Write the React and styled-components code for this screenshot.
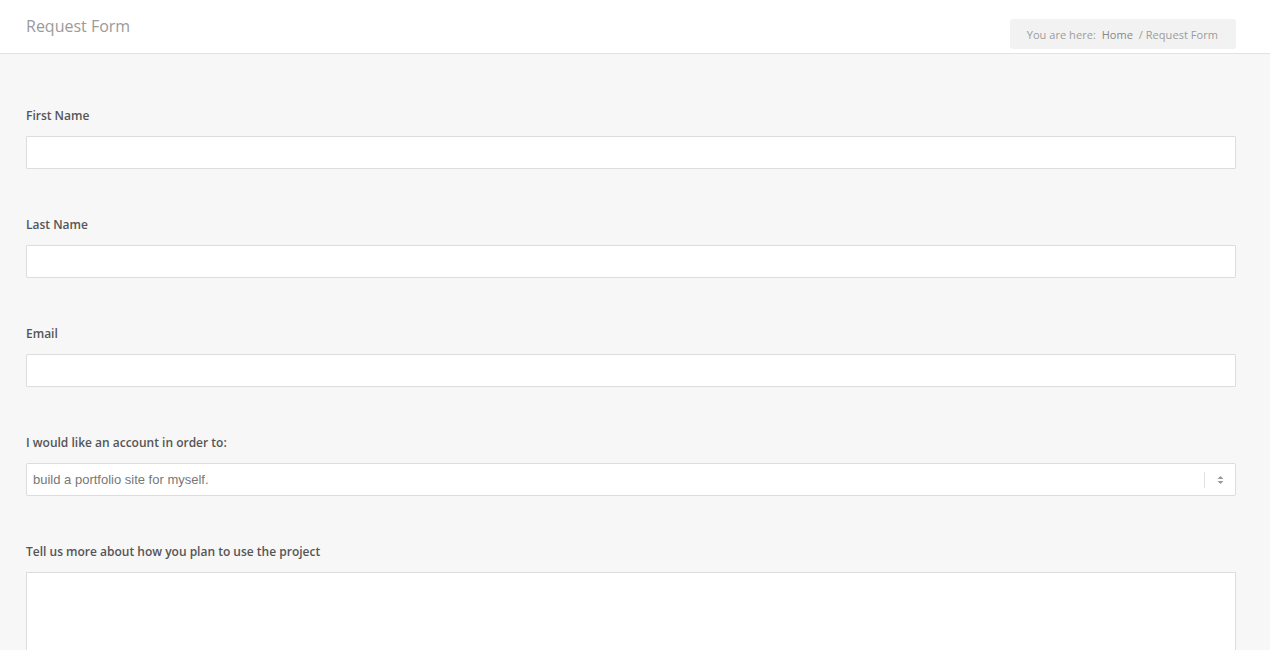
import React from 'react';
import styled, { createGlobalStyle } from 'styled-components';

const Global = createGlobalStyle`
  html, body { margin: 0; padding: 0; }
  body {
    background: #f7f7f7;
    font-family: "Open Sans", "Liberation Sans", sans-serif;
  }
`;

const Header = styled.div`
  height: 53px;
  background: #fff;
  border-bottom: 1px solid #e2e2e2;
  display: flex;
  align-items: flex-start;
  justify-content: space-between;
  padding: 0 34px 0 26px;
`;

const Title = styled.h1`
  margin: 15px 0 0;
  font-size: 16px;
  font-weight: 400;
  line-height: 22px;
  color: #9a9a9a;
`;

const Crumbs = styled.div`
  margin-top: 19px;
  height: 30px;
  display: flex;
  align-items: center;
  padding: 0 18px 0 17px;
  background: #f2f2f2;
  border-radius: 3px;
  font-size: 11px;
  letter-spacing: 0.05px;
  color: #9c9c9c;
  white-space: pre;
`;

const Crumb = styled.span`
  color: ${({ $link }) => ($link ? '#888' : '#9c9c9c')};
`;

const Main = styled.form`
  padding: 53px 34px 0 26px;
  display: flex;
  flex-direction: column;
  gap: 47px;
`;

const Field = styled.div`
  display: flex;
  flex-direction: column;
  gap: 12px;
`;

const Label = styled.label`
  font-size: 12px;
  font-weight: 600;
  line-height: 17px;
  color: #555;
`;

const Input = styled.input`
  box-sizing: border-box;
  height: 33px;
  border: 1px solid #dddddd;
  background: #fff;
  border-radius: 1px;
  outline: none;
`;

const SelectBox = styled.div`
  box-sizing: border-box;
  height: 33px;
  border: 1px solid #dddddd;
  background: #fff;
  border-radius: 2px;
  display: flex;
  align-items: center;
  padding-left: 6px;
  font-family: "Liberation Sans", Arial, sans-serif;
  font-size: 13px;
  color: #777;
`;

const SelectText = styled.span`
  flex: 1;
`;

const Arrow = styled.div`
  width: 30px;
  height: 16px;
  border-left: 1px solid #e2e2e2;
  display: flex;
  align-items: center;
  justify-content: center;
`;

const TextArea = styled.textarea`
  box-sizing: border-box;
  height: 120px;
  border: 1px solid #dddddd;
  background: #fff;
  resize: none;
  outline: none;
`;

const App = () => {
  return (
    <>
      <Global />
      <Header>
        <Title>Request Form</Title>
        <Crumbs>
          You are here:  <Crumb $link>Home</Crumb>  / Request Form
        </Crumbs>
      </Header>
      <Main>
        <Field>
          <Label>First Name</Label>
          <Input />
        </Field>
        <Field>
          <Label>Last Name</Label>
          <Input />
        </Field>
        <Field>
          <Label>Email</Label>
          <Input />
        </Field>
        <Field>
          <Label>I would like an account in order to:</Label>
          <SelectBox>
            <SelectText>build a portfolio site for myself.</SelectText>
            <Arrow>
              <svg width="7" height="10" viewBox="0 0 7 10">
                <path d="M3.5 1 L6.5 4 L0.5 4 Z M3.5 9 L6.5 6 L0.5 6 Z" fill="#999" />
              </svg>
            </Arrow>
          </SelectBox>
        </Field>
        <Field>
          <Label>Tell us more about how you plan to use the project</Label>
          <TextArea />
        </Field>
      </Main>
    </>
  );
};

export default App;
